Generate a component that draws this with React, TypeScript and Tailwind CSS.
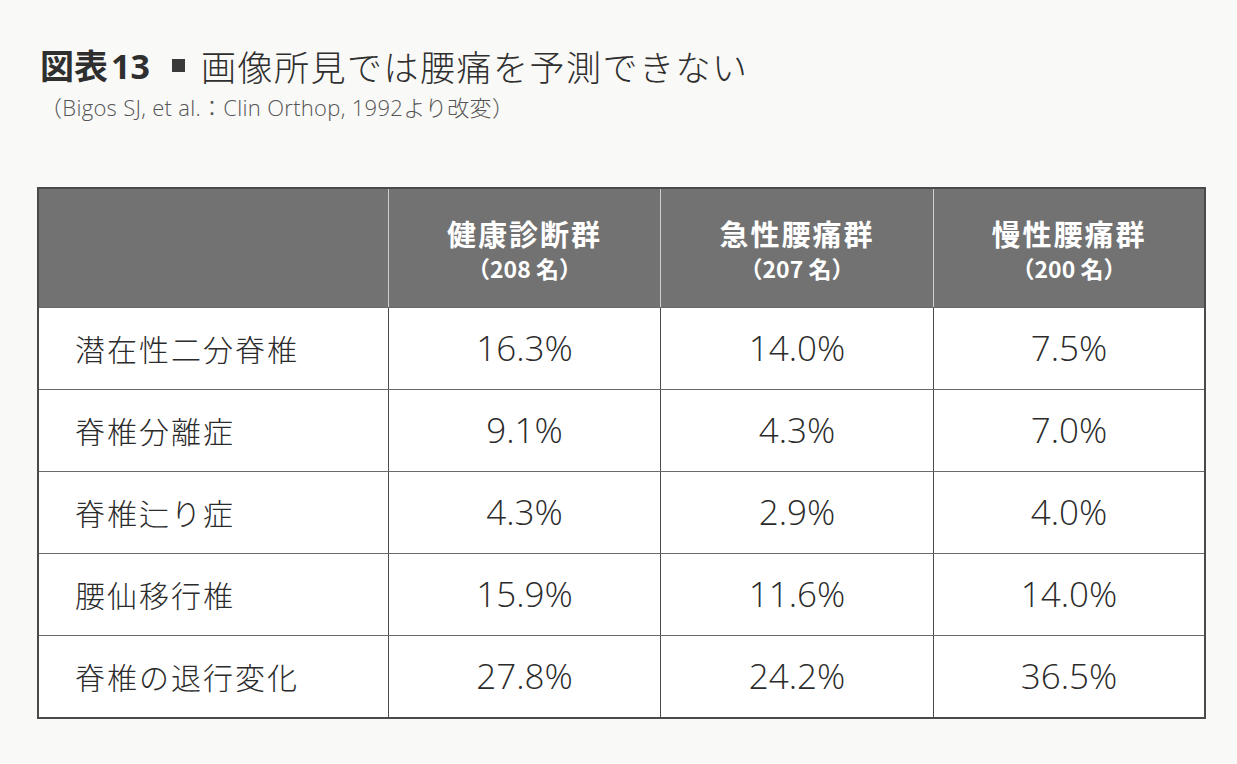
import React from "react";

const rows: [string, string, string, string][] = [
  ["潜在性二分脊椎", "16.3%", "14.0%", "7.5%"],
  ["脊椎分離症", "9.1%", "4.3%", "7.0%"],
  ["脊椎辷り症", "4.3%", "2.9%", "4.0%"],
  ["腰仙移行椎", "15.9%", "11.6%", "14.0%"],
  ["脊椎の退行変化", "27.8%", "24.2%", "36.5%"],
];

const heads: [string, string][] = [
  ["健康診断群", "（208 名）"],
  ["急性腰痛群", "（207 名）"],
  ["慢性腰痛群", "（200 名）"],
];

const jp = { fontFamily: '"Noto Sans CJK JP", "Noto Sans", sans-serif' };
const num = { fontFamily: '"Open Sans", "Noto Sans CJK JP", sans-serif' };

export default function App() {
  return (
    <div className="w-[1237px] h-[764px] overflow-hidden bg-[#f9f9f7] text-[#2b2b2b]" style={jp}>
      <div className="pl-[40px] pt-[43px]">
        <div className="flex items-center h-[44px]">
          <span className="text-[34px] font-bold text-[#2f2f2f] leading-none">
            図表<span style={num} className="ml-[3px]">13</span>
          </span>
          <span className="inline-block w-[13px] h-[13px] bg-[#3a3a3a] ml-[22px] mr-[16px]"></span>
          <span className="text-[35px] font-light tracking-[1.5px] text-[#2f2f2f] leading-none">
            画像所見では腰痛を予測できない
          </span>
        </div>
        <div className="mt-[9px] text-[22px] font-light text-[#555] leading-none tracking-[0.3px]" style={num}>
          （Bigos SJ, et al.：Clin Orthop, 1992より改変）
        </div>
      </div>
      <div className="ml-[37px] mt-[69px] w-[1169px] border-[2px] border-[#4a4a4a] bg-white">
        <div className="grid grid-cols-[349px_272px_273px_271px] h-[118px] bg-[#727272] text-white">
          <div></div>
          {heads.map(([a, b]) => (
            <div key={a} className="border-l border-[#cfcfcf] flex flex-col items-center justify-center">
              <div className="text-[29px] font-bold tracking-[2px] leading-none pt-[2px]">{a}</div>
              <div className="text-[23px] font-bold leading-none mt-[9px]">{b}</div>
            </div>
          ))}
        </div>
        {rows.map((r) => (
          <div
            key={r[0]}
            className="grid grid-cols-[349px_272px_273px_271px] h-[82px] border-t-[1.5px] border-[#6a6a6a]"
          >
            <div className="flex items-center pl-[36px] text-[30px] font-light tracking-[2px]">{r[0]}</div>
            {r.slice(1).map((v, j) => (
              <div
                key={j}
                className="border-l-[1.5px] border-[#4a4a4a] flex items-center justify-center text-[35px] font-light text-[#2b2b2b]"
                style={num}
              >
                {v}
              </div>
            ))}
          </div>
        ))}
      </div>
    </div>
  );
}
